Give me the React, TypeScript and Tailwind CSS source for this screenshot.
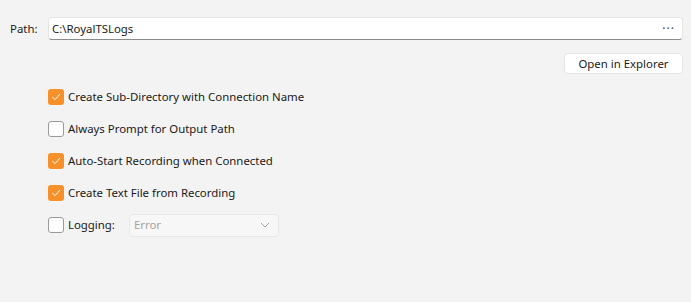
import { useState } from "react";

interface CheckRowProps {
  label: string;
  checked: boolean;
  onToggle: () => void;
  children?: React.ReactNode;
}

function CheckRow({ label, checked, onToggle, children }: CheckRowProps) {
  return (
    <div className="flex h-8 items-center">
      <button
        type="button"
        onClick={onToggle}
        className={`flex h-4 w-4 shrink-0 items-center justify-center rounded-[3px] ${
          checked ? "bg-[#f7902a]" : "border border-[#9a9a9a] bg-white"
        }`}
      >
        {checked && (
          <svg width="10" height="10" viewBox="0 0 10 10" fill="none">
            <path d="M1.5 5.2 L4 7.6 L8.6 2.4" stroke="white" strokeWidth="1" strokeLinecap="round" strokeLinejoin="round" />
          </svg>
        )}
      </button>
      <span className="ml-[4px] text-[11.4px] text-[#1a1a1a]">{label}</span>
      {children}
    </div>
  );
}

export default function App() {
  const [path, setPath] = useState("C:\\RoyalTSLogs");
  const [subDir, setSubDir] = useState(true);
  const [prompt, setPrompt] = useState(false);
  const [autoStart, setAutoStart] = useState(true);
  const [textFile, setTextFile] = useState(true);
  const [logging, setLogging] = useState(false);

  return (
    <div
      className="h-[302px] w-[691px] bg-[#f3f3f3] pl-[10px] pr-[8px] pt-[17px]"
      style={{ fontFamily: '"Segoe UI", "Noto Sans", sans-serif' }}
    >
      <div className="flex items-center">
        <span className="w-[38px] text-[11.4px] text-[#1a1a1a]">Path:</span>
        <div className="flex h-[23px] flex-1 items-center rounded-[4px] border border-[#e5e5e5] border-b-[#8a8a8a] bg-white pl-[3px] pr-[7px]">
          <input
            value={path}
            onChange={(e) => setPath(e.target.value)}
            className="flex-1 bg-transparent text-[11.4px] text-[#1a1a1a] outline-none"
          />
          <span className="text-[12px] leading-none tracking-[1px] text-[#444]">···</span>
        </div>
      </div>

      <div className="mt-[13px] flex justify-end">
        <button
          type="button"
          className="h-[21px] w-[119px] rounded-[4px] border border-[#e5e5e5] bg-white text-[11.4px] text-[#1a1a1a]"
        >
          Open in Explorer
        </button>
      </div>

      <div className="mt-[7px] flex flex-col pl-[38px]">
        <CheckRow label="Create Sub-Directory with Connection Name" checked={subDir} onToggle={() => setSubDir(!subDir)} />
        <CheckRow label="Always Prompt for Output Path" checked={prompt} onToggle={() => setPrompt(!prompt)} />
        <CheckRow label="Auto-Start Recording when Connected" checked={autoStart} onToggle={() => setAutoStart(!autoStart)} />
        <CheckRow label="Create Text File from Recording" checked={textFile} onToggle={() => setTextFile(!textFile)} />
        <CheckRow label="Logging:" checked={logging} onToggle={() => setLogging(!logging)}>
          <div className="ml-[14px] flex h-[23px] w-[150px] items-center justify-between rounded-[4px] border border-[#e8e8e8] bg-[#f7f7f7] pl-[4px] pr-[8px]">
            <span className="text-[11.4px] text-[#a3a3a3]">Error</span>
            <svg width="10" height="6" viewBox="0 0 10 6" fill="none">
              <path d="M1 1 L5 5 L9 1" stroke="#a3a3a3" strokeWidth="1" />
            </svg>
          </div>
        </CheckRow>
      </div>
    </div>
  );
}
